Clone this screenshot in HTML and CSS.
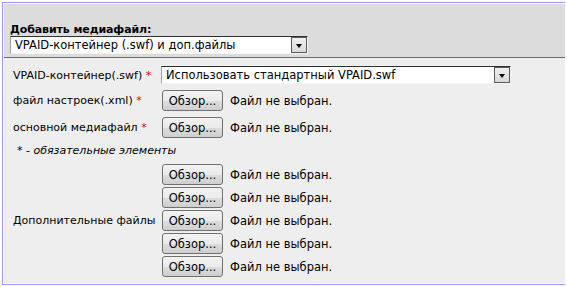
FILE: index.html
```html
<!DOCTYPE html>
<html lang="ru">
  <head>
    <meta charset="UTF-8" />
    <title>Добавить медиафайл</title>
    <link rel="stylesheet" href="styles.css">
  </head>
  <body>
    <div class="box">
      <div class="head">
        <div class="head-title">Добавить медиафайл:</div>
        <div class="select select-type">
          <span class="select-text">VPAID-контейнер (.swf) и доп.файлы</span>
          <span class="select-arrow"></span>
        </div>
      </div>

      <div class="form">
        <div class="row">
          <label class="lbl">VPAID-контейнер(.swf) <span class="req">*</span></label>
          <div class="select select-vpaid">
            <span class="select-text">Использовать стандартный VPAID.swf</span>
            <span class="select-arrow"></span>
          </div>
        </div>
        <div class="row">
          <label class="lbl">файл настроек(.xml) <span class="req">*</span></label>
          <div class="file"><button class="browse">Обзор...</button><span>Файл не выбран.</span></div>
        </div>
        <div class="row">
          <label class="lbl">основной медиафайл <span class="req">*</span></label>
          <div class="file"><button class="browse">Обзор...</button><span>Файл не выбран.</span></div>
        </div>
        <div class="note">* - <em>обязательные элементы</em></div>
        <div class="row row-extra">
          <label class="lbl">Дополнительные файлы</label>
          <div class="files">
            <div class="file"><button class="browse">Обзор...</button><span>Файл не выбран.</span></div>
            <div class="file"><button class="browse">Обзор...</button><span>Файл не выбран.</span></div>
            <div class="file"><button class="browse">Обзор...</button><span>Файл не выбран.</span></div>
            <div class="file"><button class="browse">Обзор...</button><span>Файл не выбран.</span></div>
            <div class="file"><button class="browse">Обзор...</button><span>Файл не выбран.</span></div>
          </div>
        </div>
      </div>
    </div>
  </body>
</html>
```

FILE: styles.css
```css
body {
  margin: 2px;
  font-family: "DejaVu Sans", Verdana, sans-serif;
  font-size: 11.5px;
  color: #000;
  background: #fff;
}
.box {
  width: 561px;
  height: 279px;
  border: 1px solid #9999ff;
  padding: 1px;
  background: #fff;
  display: flex;
  flex-direction: column;
}
.head {
  background: #dcdcdc;
  padding: 20px 6px 3px;
  border-bottom: 1px solid #6e6e6e;
}
.head-title {
  font-weight: bold;
  font-size: 11px;
  line-height: 12px;
  letter-spacing: -0.1px;
}
.select {
  display: flex;
  align-items: stretch;
  height: 18px;
  box-sizing: border-box;
  background: #fff;
  border-top: 1px solid #303030;
  border-left: 1px solid #a0a0a0;
  border-bottom: 1px solid #f4f4f4;
  border-right: 1px solid #f4f4f4;
}
.select-type {
  width: 298px;
}
.select-vpaid {
  width: 350px;
}
.select-text {
  flex: 1;
  padding-left: 4px;
  line-height: 16px;
  white-space: nowrap;
  overflow: hidden;
}
.select-arrow {
  width: 14px;
  border: 1px solid #5a5a5a;
  background: linear-gradient(#f0f0f0, #d8d8d8);
  position: relative;
}
.select-arrow::after {
  content: "";
  position: absolute;
  left: 4px;
  top: 6px;
  border-left: 3px solid transparent;
  border-right: 3px solid transparent;
  border-top: 4px solid #000;
}
.form {
  flex: 1;
  background: #eeeeee;
  padding: 8px 0 0 9px;
}
.row {
  display: grid;
  grid-template-columns: 148px auto;
  align-items: center;
  margin-bottom: 6px;
}
.lbl {
  font-size: 11px;
  white-space: nowrap;
}
.req {
  color: #e00000;
}
.file {
  display: flex;
  align-items: center;
  gap: 7px;
  height: 21px;
  margin-left: 1px;
}
.files {
  display: flex;
  flex-direction: column;
  gap: 2px;
}
.browse {
  width: 61px;
  height: 21px;
  padding: 0;
  font: inherit;
  color: #000;
  border: 1px solid #707070;
  border-radius: 3px;
  background: linear-gradient(#f2f2f2 0%, #ebebeb 50%, #dddddd 51%, #cfcfcf 100%);
}
.note {
  height: 14px;
  line-height: 14px;
  margin-top: -6px;
  padding: 6px 0 6px 4px;
  font-size: 11px;
}
```
